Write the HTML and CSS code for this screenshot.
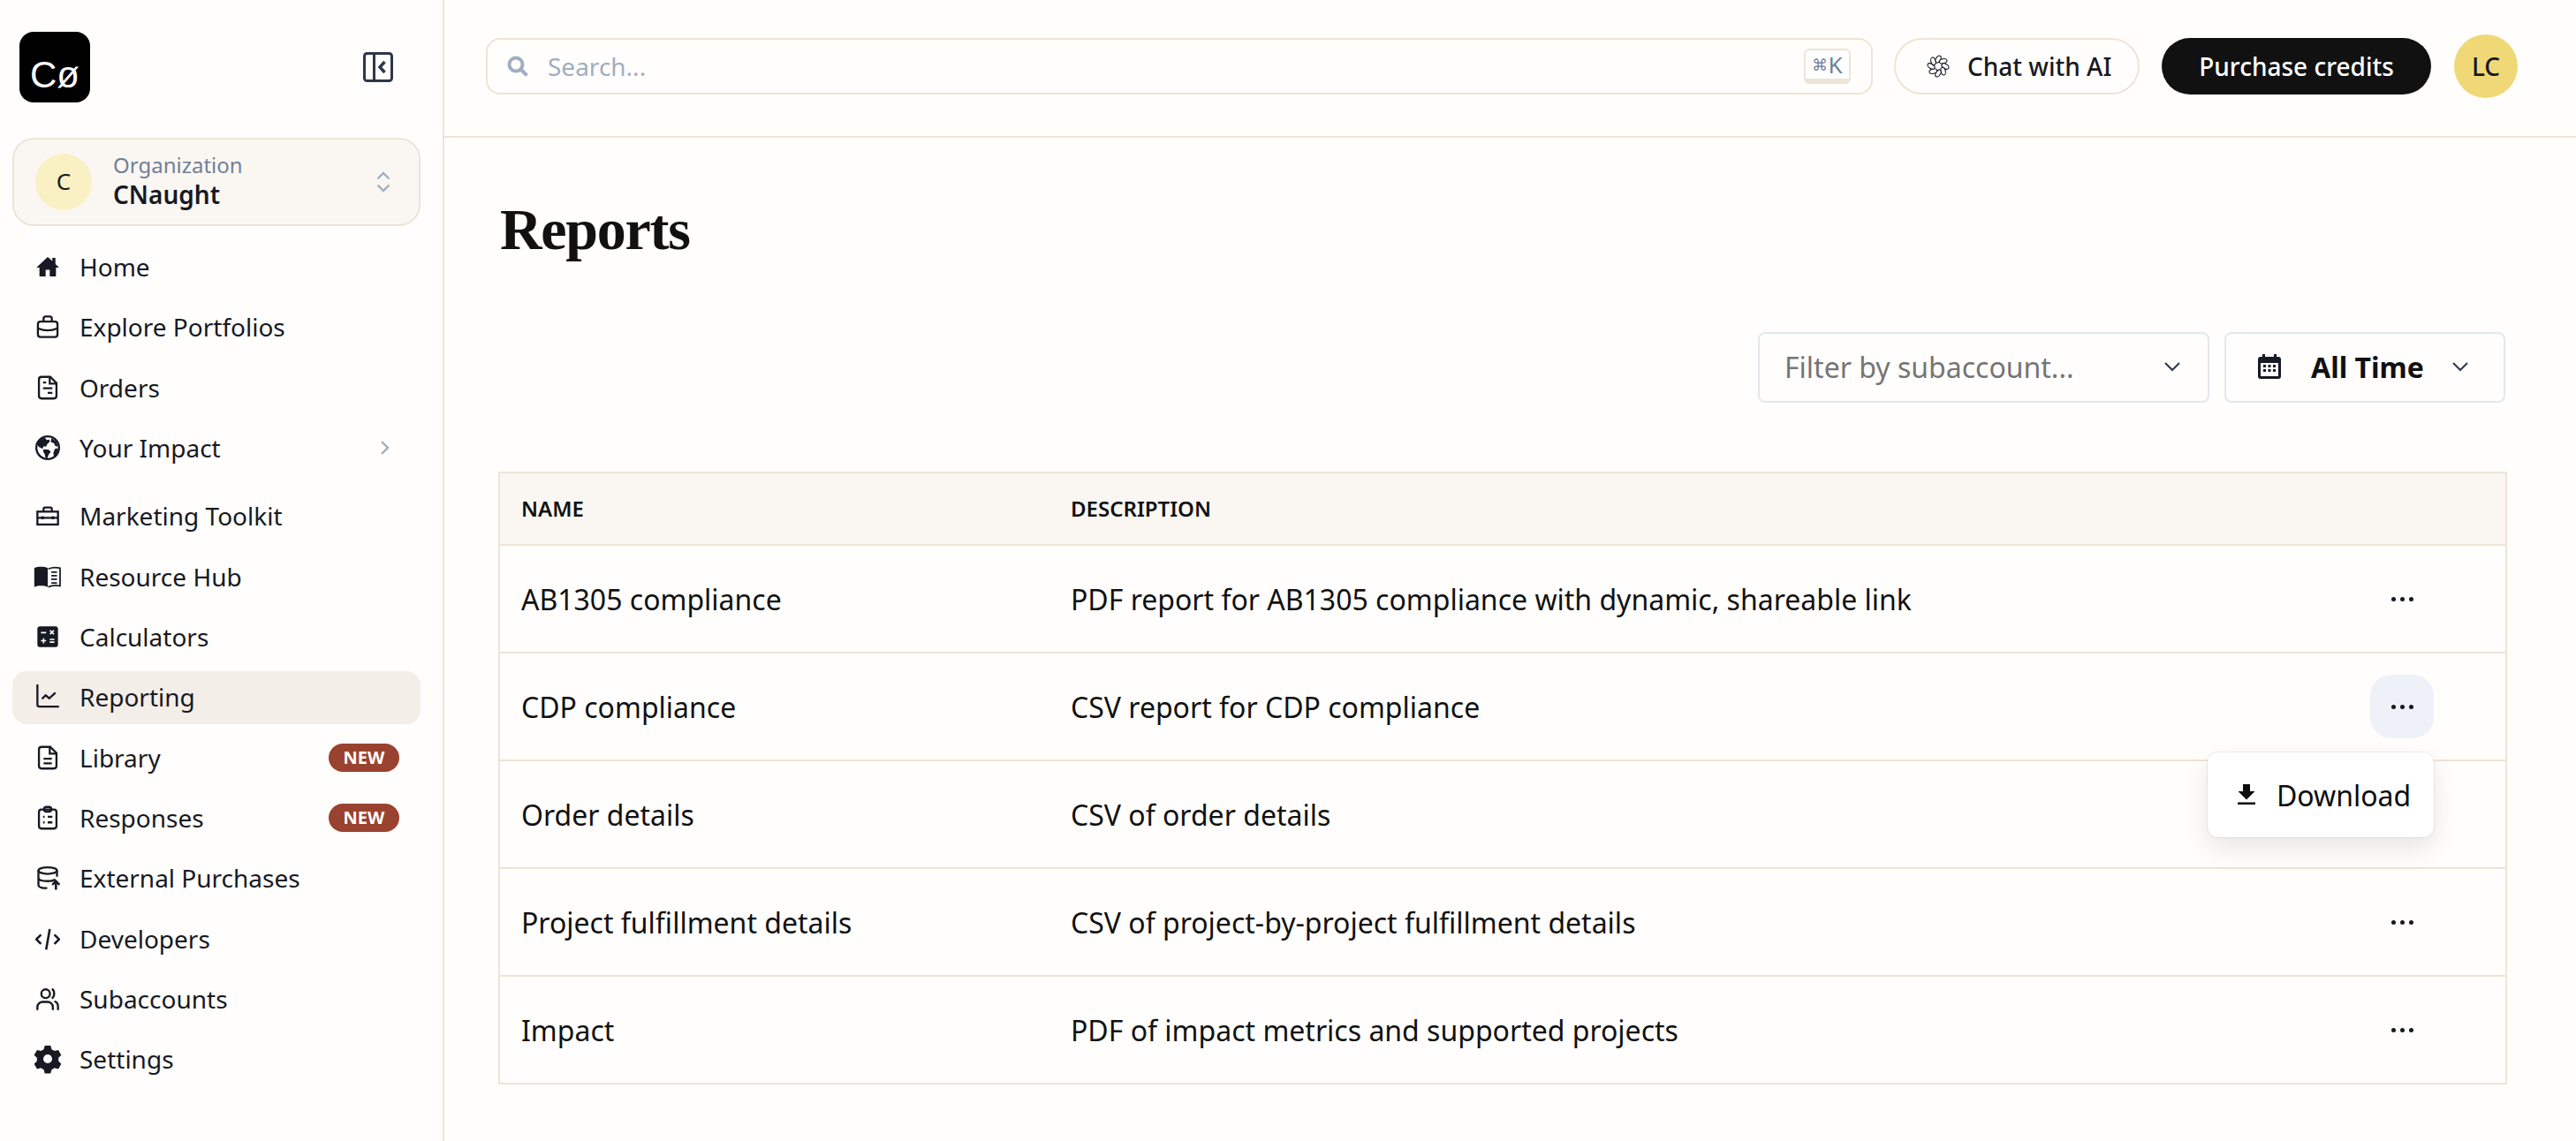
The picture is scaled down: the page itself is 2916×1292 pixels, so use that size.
FILE: index.html
```html
<!DOCTYPE html>
<html>
<head>
  <title>Reports</title>
  <meta charset="UTF-8">
  <link rel="stylesheet" href="styles.css">
</head>
<body>
  <div class="app">
    <aside class="sidebar">
      <div class="brand-row">
        <div class="logo">Cø</div>
        <svg class="collapse-icon" viewBox="0 0 34 34" fill="none" stroke="#2d3748" stroke-width="3">
          <rect x="1.5" y="1.5" width="31" height="31" rx="3"/>
          <path d="M12.5 1.5v31"/>
          <path d="M24.5 11l-5.500 6 5.500 6" stroke-width="3.400"/>
        </svg>
      </div>

      <div class="org-card">
        <div class="org-avatar">C</div>
        <div class="org-text">
          <div class="org-label">Organization</div>
          <div class="org-name">CNaught</div>
        </div>
        <svg class="org-arrows" viewBox="0 0 16 24" fill="none" stroke="#a0aec0" stroke-width="2.400">
          <path d="M1.500 8.500 8 2l6.500 6.500"/>
          <path d="M1.500 15.500 8 22l6.500-6.500"/>
        </svg>
      </div>

      <nav class="nav">
        <a class="nav-item">
          <svg class="nav-icon" viewBox="0 0 24 24" fill="#171923"><path d="M12 2.500 1 12.800h3V21.500h6v-6.500h4v6.500h6V12.800h3L19.500 9.500V3.500h-3v3z"/></svg>
          <span>Home</span>
        </a>
        <a class="nav-item">
          <svg class="nav-icon" viewBox="0 0 24 24" fill="none" stroke="#171923" stroke-width="2">
            <rect x="2.500" y="7" width="19" height="15" rx="2.500"/>
            <path d="M8 7V4A2 2 0 0 1 10 2h4a2 2 0 0 1 2 2v3"/>
            <path d="M2.500 13.500c6 2.600 13 2.600 19 0"/>
            <path d="M12 15v.1" stroke-width="2.600"/>
          </svg>
          <span>Explore Portfolios</span>
        </a>
        <a class="nav-item">
          <svg class="nav-icon" viewBox="0 0 24 24" fill="none" stroke="#171923" stroke-width="2">
            <path d="M6 1.500h8.500l6 6V20a2.500 2.500 0 0 1-2.500 2.500H6A2.500 2.500 0 0 1 3.500 20V4A2.500 2.500 0 0 1 6 1.500z"/>
            <path d="M14 2v6h6M7.500 7h3M7.500 12.500h9M12 17h4.500"/>
          </svg>
          <span>Orders</span>
        </a>
        <a class="nav-item impact">
          <svg class="nav-icon globe" viewBox="0 0 24 24">
            <circle cx="12" cy="12" r="11" fill="#fff" stroke="#171923" stroke-width="2"/>
            <path fill="#171923" d="M5 4l4-2 2 2.500 2.500-.5.500 2-2.500 2.500-1 2.500-2.500-.500L7 13 3 11 2 8zM8 13.500l5 .5 2 2-2 2.500-1.500 4-1.500-.5-1-4-1.500-2.500zM15.500 2.500l5 3.500 1.500 5-2.500-.5-1.500-3-3-1zM19 13l3-.5-1 5-3 3.500-.5-4z"/>
          </svg>
          <span>Your Impact</span>
          <svg class="nav-chevron" viewBox="0 0 12 18" fill="none" stroke="#a0aec0" stroke-width="2.400"><path d="M2 2l7 7-7 7"/></svg>
        </a>
        <a class="nav-item">
          <svg class="nav-icon" viewBox="0 0 24 24" fill="none" stroke="#171923" stroke-width="2">
            <rect x="2" y="8" width="20" height="12.500"/>
            <path d="M8 8V5.500A1.500 1.500 0 0 1 9.500 4h5A1.500 1.500 0 0 1 16 5.500V8M2 14h20"/>
            <path d="M7 12.500v3M17 12.500v3" stroke-width="2.400"/>
          </svg>
          <span>Marketing Toolkit</span>
        </a>
        <a class="nav-item">
          <svg class="nav-icon wide" viewBox="0 0 24 24" fill="none" stroke="#171923" stroke-width="1.500">
            <path fill="#171923" stroke="none" d="M-1 3.500c4-1.500 9-1.500 13 0V22c-4-1.500-9-1.500-13 0z"/>
            <path d="M12.500 4.500c3-1.200 8-1.600 11.500-.8V21c-3.500-.8-8.500-.4-11.500 1M15.500 7.500h5.500M15.500 11h5.500M15.500 14.500h5.500M15.500 18h5.500"/>
          </svg>
          <span>Resource Hub</span>
        </a>
        <a class="nav-item">
          <svg class="nav-icon" viewBox="0 0 24 24">
            <rect x="2" y="2" width="20" height="20" rx="2.500" fill="#171923"/>
            <path fill="none" stroke="#fff" stroke-width="1.400" d="M5.500 8h5M14.200 5.800l3.800 3.800M18 5.800l-3.800 3.800M8 13.400v5M5.500 15.900h5M14 14.600h4.500M14 17.200h4.500"/>
          </svg>
          <span>Calculators</span>
        </a>
        <a class="nav-item active">
          <svg class="nav-icon" viewBox="0 0 24 24" fill="none" stroke="#171923" stroke-width="2">
            <path d="M2 0v19.500A2 2 0 0 0 4 21.500h19"/>
            <path d="M6.500 14l3.500-3.500 3.500 3 6-5.500"/>
          </svg>
          <span>Reporting</span>
        </a>
        <a class="nav-item">
          <svg class="nav-icon" viewBox="0 0 24 24" fill="none" stroke="#171923" stroke-width="2">
            <path d="M6 1.500h8.500l6 6V20a2.500 2.500 0 0 1-2.500 2.500H6A2.500 2.500 0 0 1 3.500 20V4A2.500 2.500 0 0 1 6 1.500z"/>
            <path d="M14 2v6h6M8 13h8M8 17.500h8"/>
          </svg>
          <span>Library</span>
          <span class="badge">NEW</span>
        </a>
        <a class="nav-item">
          <svg class="nav-icon" viewBox="0 0 24 24" fill="none" stroke="#171923" stroke-width="2">
            <rect x="3.500" y="4" width="17" height="18.500" rx="2.500"/>
            <rect x="8.500" y="1.500" width="7" height="4.500" rx="2.200"/>
            <path d="M7.500 11h1.500M12 11h4.500M7.500 16.500h1.500M12 16.500h4.500"/>
          </svg>
          <span>Responses</span>
          <span class="badge">NEW</span>
        </a>
        <a class="nav-item">
          <svg class="nav-icon" viewBox="0 0 24 24" fill="none" stroke="#171923" stroke-width="2">
            <ellipse cx="12" cy="5" rx="9" ry="3.200"/>
            <path d="M3 5v14c0 2 4 3 8.500 3M3 12c0 2.200 4 3.200 9 3.200 3 0 6-.6 7.500-1.700M21 5v6"/>
            <path d="M20 23.500V15.500M16.500 18.800l3.500-3.500 3.500 3.500" stroke-width="2.200"/>
          </svg>
          <span>External Purchases</span>
        </a>
        <a class="nav-item">
          <svg class="nav-icon" viewBox="0 0 24 24" fill="none" stroke="#171923" stroke-width="2.200">
            <path d="M5.500 8 1 12.500l4.500 4.500M18.500 8l4.500 4.500-4.500 4.500M14 2.500l-3.500 20"/>
          </svg>
          <span>Developers</span>
        </a>
        <a class="nav-item">
          <svg class="nav-icon" viewBox="0 0 24 24" fill="none" stroke="#171923" stroke-width="2">
            <circle cx="10" cy="7" r="4.200"/>
            <path d="M2 23v-3c0-3 2.500-5 5-5h5c2.500 0 5 2 5 5v3M16 2.500c2.800 1 3.200 7 0 9M18.500 14.500c2 .5 3.500 2.500 3.500 5V23"/>
          </svg>
          <span>Subaccounts</span>
        </a>
        <a class="nav-item">
          <svg class="nav-icon wide" viewBox="0 0 24 24" fill="#171923">
            <path transform="translate(12 12) scale(1.230) translate(-12 -12)" fill-rule="evenodd" d="M9.700 1.500h4.600l.8 3 2.300 1.300 3-.8 2.300 4-2.200 2.200v2.600l2.200 2.200-2.300 4-3-.8-2.300 1.300-.8 3H9.700l-.8-3-2.300-1.300-3 .8-2.300-4 2.200-2.200v-2.600L1.300 9l2.300-4 3 .8 2.300-1.300zM12 8.500a3.500 3.500 0 1 0 0 7 3.500 3.500 0 0 0 0-7z"/>
          </svg>
          <span>Settings</span>
        </a>
      </nav>
    </aside>

    <main class="main">
      <header class="topbar">
        <div class="search">
          <svg class="search-icon" viewBox="0 0 24 24" fill="none" stroke="#a0aec0" stroke-width="4">
            <circle cx="10" cy="10" r="7.500"/>
            <path d="M15.500 15.500l7 7"/>
          </svg>
          <span class="search-text">Search...</span>
          <span class="kbd"><span class="kbd-cmd">⌘</span>K</span>
        </div>
        <button class="chat-btn">
          <svg class="chat-icon" viewBox="0 0 26 26" fill="#fffefd" stroke="#171923" stroke-width="1.100">
            <ellipse cx="13" cy="5" rx="2.600" ry="4.400" transform="rotate(30 13 5)"/>
            <ellipse cx="13" cy="5" rx="2.600" ry="4.400" transform="rotate(45 13 13) rotate(30 13 5)"/>
            <ellipse cx="13" cy="5" rx="2.600" ry="4.400" transform="rotate(90 13 13) rotate(30 13 5)"/>
            <ellipse cx="13" cy="5" rx="2.600" ry="4.400" transform="rotate(135 13 13) rotate(30 13 5)"/>
            <ellipse cx="13" cy="5" rx="2.600" ry="4.400" transform="rotate(180 13 13) rotate(30 13 5)"/>
            <ellipse cx="13" cy="5" rx="2.600" ry="4.400" transform="rotate(225 13 13) rotate(30 13 5)"/>
            <ellipse cx="13" cy="5" rx="2.600" ry="4.400" transform="rotate(270 13 13) rotate(30 13 5)"/>
            <ellipse cx="13" cy="5" rx="2.600" ry="4.400" transform="rotate(315 13 13) rotate(30 13 5)"/>
          </svg>
          <span>Chat with AI</span>
        </button>
        <button class="buy-btn">Purchase credits</button>
        <div class="user-avatar">LC</div>
      </header>

      <section class="content">
        <h1 class="title">Reports</h1>

        <div class="filters">
          <div class="filter-select">
            <span>Filter by subaccount...</span>
            <svg class="chevron" viewBox="0 0 20 12" fill="none" stroke="#2d3748" stroke-width="2"><path d="M2 2l8 8 8-8"/></svg>
          </div>
          <div class="date-select">
            <svg class="calendar" viewBox="0 0 26 28" fill="#171923">
              <path fill-rule="evenodd" d="M5 0h3v3h10V0h3v3h2a3 3 0 0 1 3 3v19a3 3 0 0 1-3 3H3a3 3 0 0 1-3-3V6a3 3 0 0 1 3-3h2zM3 10v15h20V10z"/>
              <path d="M6 12h3v3H6zM11.500 12h3v3h-3zM17 12h3v3h-3zM6 17h3v3H6zM11.500 17h3v3h-3zM17 17h3v3h-3z"/>
            </svg>
            <span class="date-label">All Time</span>
            <svg class="chevron" viewBox="0 0 20 12" fill="none" stroke="#2d3748" stroke-width="2"><path d="M2 2l8 8 8-8"/></svg>
          </div>
        </div>

        <table class="reports">
          <colgroup>
            <col class="col-name">
            <col class="col-desc">
            <col class="col-action">
          </colgroup>
          <thead>
            <tr><th>Name</th><th>Description</th><th></th></tr>
          </thead>
          <tbody>
            <tr>
              <td>AB1305 compliance</td>
              <td>PDF report for AB1305 compliance with dynamic, shareable link</td>
              <td><div class="more"><span class="dots"><i></i><i></i><i></i></span></div></td>
            </tr>
            <tr>
              <td>CDP compliance</td>
              <td>CSV report for CDP compliance</td>
              <td>
                <div class="more open">
                  <span class="dots"><i></i><i></i><i></i></span>
                  <div class="menu">
                    <svg class="download-icon" viewBox="0 0 20 24" fill="#0d0d0d"><path d="M6 0h8v8h5.500L10 17.500.5 8H6zM0 20.500h20V23H0z"/></svg>
                    <span>Download</span>
                  </div>
                </div>
              </td>
            </tr>
            <tr>
              <td>Order details</td>
              <td>CSV of order details</td>
              <td></td>
            </tr>
            <tr>
              <td>Project fulfillment details</td>
              <td>CSV of project-by-project fulfillment details</td>
              <td><div class="more"><span class="dots"><i></i><i></i><i></i></span></div></td>
            </tr>
            <tr>
              <td>Impact</td>
              <td>PDF of impact metrics and supported projects</td>
              <td><div class="more"><span class="dots"><i></i><i></i><i></i></span></div></td>
            </tr>
          </tbody>
        </table>
      </section>
    </main>
  </div>
</body>
</html>
```

FILE: styles.css
```css
* {
  box-sizing: border-box;
}
html, body {
  height: 100%;
}
body {
  margin: 0;
  background-color: #fffefd;
  color: #171923;
  font-family: "Noto Sans", sans-serif;
  font-size: 28px;
  overflow: hidden;
}
.app {
  display: flex;
  height: 100%;
}

/* sidebar */
.sidebar {
  width: 503px;
  flex-shrink: 0;
  padding: 0 25px 0 14px;
  border-right: 2px solid #ede4d6;
}
.brand-row {
  display: flex;
  align-items: center;
  justify-content: space-between;
  height: 156px;
  padding: 36px 31px 40px 8px;
}
.logo {
  display: flex;
  align-items: flex-end;
  justify-content: center;
  width: 80px;
  height: 80px;
  padding-bottom: 8px;
  background-color: #000;
  border-radius: 16px;
  color: #fff;
  font-family: "Liberation Sans", sans-serif;
  font-size: 42px;
  line-height: 46px;
}
.collapse-icon {
  width: 34px;
  height: 34px;
}
.org-card {
  display: flex;
  align-items: center;
  height: 100px;
  padding: 0 32px 0 24px;
  background-color: #faf7f3;
  border: 2px solid #ede4d6;
  border-radius: 24px;
}
.org-avatar {
  display: flex;
  align-items: center;
  justify-content: center;
  width: 64px;
  height: 64px;
  margin-right: 25px;
  padding-bottom: 2px;
  background-color: #f9f0c4;
  border-radius: 50%;
  font-size: 26px;
}
.org-text {
  flex: 1;
  margin-left: -1px;
  padding-bottom: 5px;
}
.org-label {
  font-size: 24px;
  line-height: 32px;
  color: #718096;
}
.org-name {
  font-size: 28px;
  line-height: 34px;
  font-weight: 600;
}
.org-arrows {
  width: 16px;
  height: 24px;
}
.nav {
  display: flex;
  flex-direction: column;
  gap: 8.33px;
  margin-top: 17px;
}
.nav-item {
  display: flex;
  align-items: center;
  gap: 22px;
  height: 60px;
  padding: 0 24px 2px 26px;
  border-radius: 16px;
}
.nav-item.active {
  background-color: #f3eee8;
}
.nav-item.impact {
  margin-bottom: 9px;
}
.nav-icon {
  width: 28px;
  height: 28px;
  flex-shrink: 0;
}
.nav-icon.wide {
  overflow: visible;
}
.nav-chevron {
  width: 12px;
  height: 18px;
  margin-left: auto;
  margin-right: 10px;
}
.badge {
  margin-left: auto;
  width: 80px;
  height: 32px;
  background-color: #9a4230;
  border-radius: 16px;
  color: #fff;
  font-size: 20px;
  font-weight: 700;
  line-height: 32px;
  text-align: center;
}

/* top bar */
.main {
  flex: 1;
  min-width: 0;
}
.topbar {
  display: flex;
  align-items: center;
  height: 156px;
  padding: 0 66px 4px 47px;
  border-bottom: 2px solid #ede4d6;
}
.search {
  display: flex;
  align-items: center;
  flex: 1;
  height: 64px;
  margin-right: 24px;
  padding: 0 23px 0 22px;
  border: 2px solid #ede4d6;
  border-radius: 16px;
}
.search-icon {
  width: 24px;
  height: 24px;
  margin-right: 22px;
}
.search-text {
  flex: 1;
  color: #a0aec0;
}
.kbd {
  display: flex;
  align-items: center;
  justify-content: center;
  width: 53px;
  height: 40px;
  background-color: #fff;
  border: 2px solid #ede4d6;
  border-bottom-width: 6px;
  border-radius: 6px;
  color: #718096;
  font-size: 26px;
  line-height: 30px;
}
.kbd-cmd {
  font-size: 18px;
}
button {
  height: 64px;
  border-radius: 32px;
  font-family: inherit;
  font-size: 28px;
  font-weight: 500;
  cursor: pointer;
}
.chat-btn {
  display: flex;
  align-items: center;
  gap: 20px;
  width: 278px;
  padding: 0 0 1px 35px;
  margin-right: 25px;
  background-color: #fffefd;
  border: 2px solid #ede4d6;
  color: #171923;
}
.chat-icon {
  width: 26px;
  height: 26px;
}
.buy-btn {
  width: 305px;
  margin-right: 26px;
  padding: 0 0 1px;
  background-color: #111;
  border: none;
  color: #fff;
}
.user-avatar {
  display: flex;
  align-items: center;
  justify-content: center;
  width: 72px;
  height: 72px;
  background-color: #f0d877;
  border-radius: 50%;
  font-weight: 500;
}

/* page content */
.content {
  padding: 0 78px 0 61px;
}
.title {
  margin: 64px 0 0 2px;
  height: 80px;
  color: #111;
  font-family: "Liberation Serif", serif;
  font-size: 66px;
  font-weight: 700;
  letter-spacing: -1.300px;
  line-height: 80px;
}
.filters {
  display: flex;
  justify-content: flex-end;
  gap: 17px;
  margin: 76px 2px 78px 0;
}
.filter-select,
.date-select {
  display: flex;
  align-items: center;
  height: 80px;
  border: 2px solid #e2e8f0;
  border-radius: 8px;
  font-size: 32px;
}
.filter-select {
  justify-content: space-between;
  width: 511px;
  padding: 0 30px 2px 28px;
  color: #757575;
}
.date-select {
  width: 318px;
  padding: 0 0 2px 36px;
}
.calendar {
  width: 26px;
  height: 28px;
  margin-right: 34px;
}
.date-label {
  color: #111;
  font-weight: 700;
  margin-right: 31px;
}
.chevron {
  width: 20px;
  height: 12px;
}

/* table */
.reports {
  width: 100%;
  border-collapse: collapse;
  table-layout: fixed;
  border: 2px solid #ede4d6;
}
.col-name {
  width: 623px;
}
.col-action {
  width: 192px;
}
.reports th {
  height: 82px;
  padding: 0 0 2px 24px;
  background-color: #faf7f3;
  border-bottom: 2px solid #ede4d6;
  color: #111;
  font-size: 24px;
  font-weight: 600;
  text-align: left;
  text-transform: uppercase;
}
.reports td {
  height: 122px;
  padding: 0 0 0 24px;
  border-bottom: 2px solid #ede4d6;
  font-size: 32px;
  color: #111;
}
.more {
  position: relative;
  display: flex;
  align-items: center;
  justify-content: center;
  width: 72px;
  height: 72px;
  margin-left: 14px;
  border-radius: 24px;
}
.more.open {
  background-color: #eef1f7;
}
.dots {
  display: flex;
  gap: 5px;
}
.dots i {
  width: 5px;
  height: 5px;
  background-color: #171923;
  border-radius: 50%;
}
.menu {
  position: absolute;
  top: 88px;
  right: 0;
  display: flex;
  align-items: center;
  gap: 24px;
  width: 256px;
  height: 96px;
  padding-left: 34px;
  background-color: #fff;
  border-radius: 12px;
  box-shadow: 0 0 0 1px rgba(0, 0, 0, 0.06), 0 12px 30px rgba(0, 0, 0, 0.1);
  color: #0d0d0d;
}
.download-icon {
  width: 20px;
  height: 24px;
}
```
